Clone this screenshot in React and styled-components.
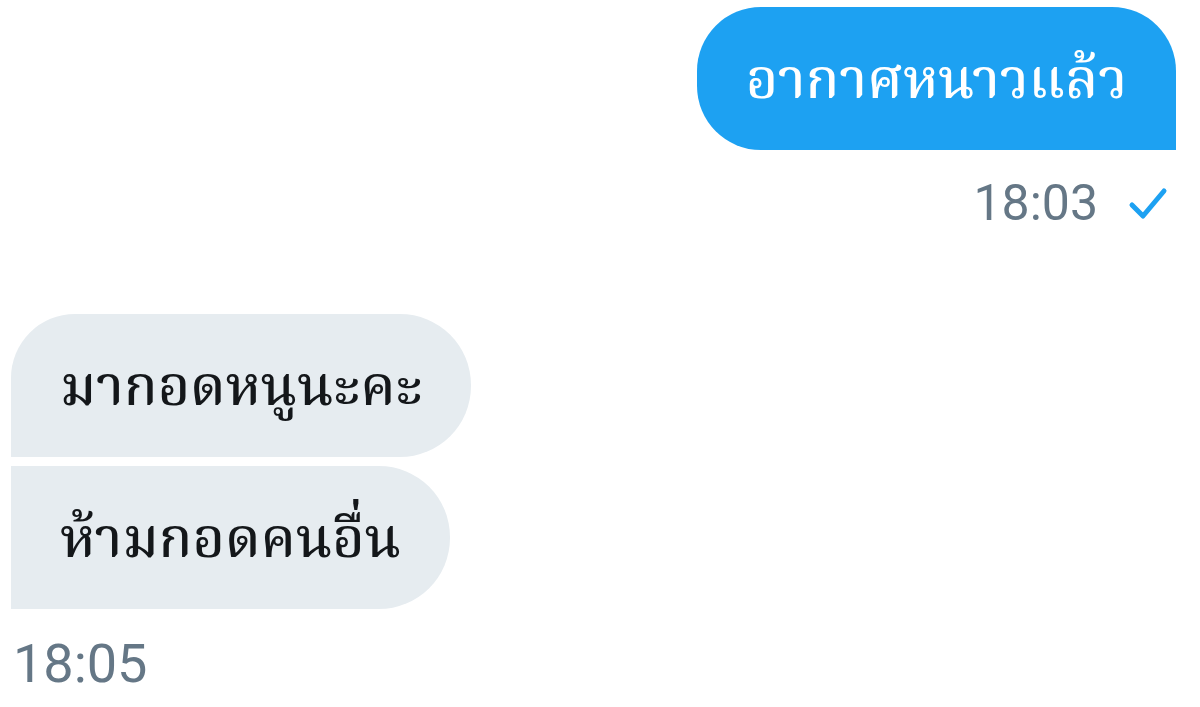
import React from 'react';
import styled, { createGlobalStyle } from 'styled-components';

const GlobalStyle = createGlobalStyle`
  body {
    margin: 0;
    background: #ffffff;
    font-family: Roboto, "Noto Sans", sans-serif;
  }
`;

const Thread = styled.div`
  display: flex;
  flex-direction: column;
  padding: 7px 24px 0 11px;
`;

const Group = styled.div`
  display: flex;
  flex-direction: column;
  align-items: ${p => (p.$mine ? 'flex-end' : 'flex-start')};
  gap: 9px;
  margin-bottom: ${p => p.$space || 0}px;
`;

const Bubble = styled.div`
  box-sizing: border-box;
  height: 143px;
  display: flex;
  align-items: center;
  padding: 8px 49px 0;
  font-family: "Noto Serif Thai", "Noto Sans", serif;
  font-size: 55px;
  font-weight: 500;
  color: ${p => (p.$mine ? '#ffffff' : '#14171a')};
  background: ${p => (p.$mine ? '#1da1f2' : '#e6ecf0')};
  border-radius: ${p => p.$radius};
  white-space: nowrap;
`;

const Meta = styled.div`
  display: flex;
  align-items: center;
  gap: 30px;
  margin: ${p => (p.$mine ? '14px 8px 0 0' : '16px 0 0 2px')};
  font-size: ${p => (p.$mine ? 50 : 54)}px;
  line-height: 60px;
  color: #657786;
`;

const Check = () => (
  <svg width="40" height="36" viewBox="0 0 40 36" fill="none">
    <path d="M4 20 L15 31 L36 6" stroke="#1da1f2" strokeWidth="5" strokeLinecap="round" strokeLinejoin="round" />
  </svg>
);

export default function App() {
  return (
    <>
      <GlobalStyle />
      <Thread>
        <Group $mine $space={81}>
          <Bubble $mine $radius="64px 64px 0 64px">อากาศหนาวแล้ว</Bubble>
          <Meta $mine>
            18:03
            <Check />
          </Meta>
        </Group>
        <Group>
          <Bubble $radius="64px 71px 71px 0">มากอดหนูนะคะ</Bubble>
          <Bubble $radius="0 71px 71px 0">ห้ามกอดคนอื่น</Bubble>
          <Meta>18:05</Meta>
        </Group>
      </Thread>
    </>
  );
}
